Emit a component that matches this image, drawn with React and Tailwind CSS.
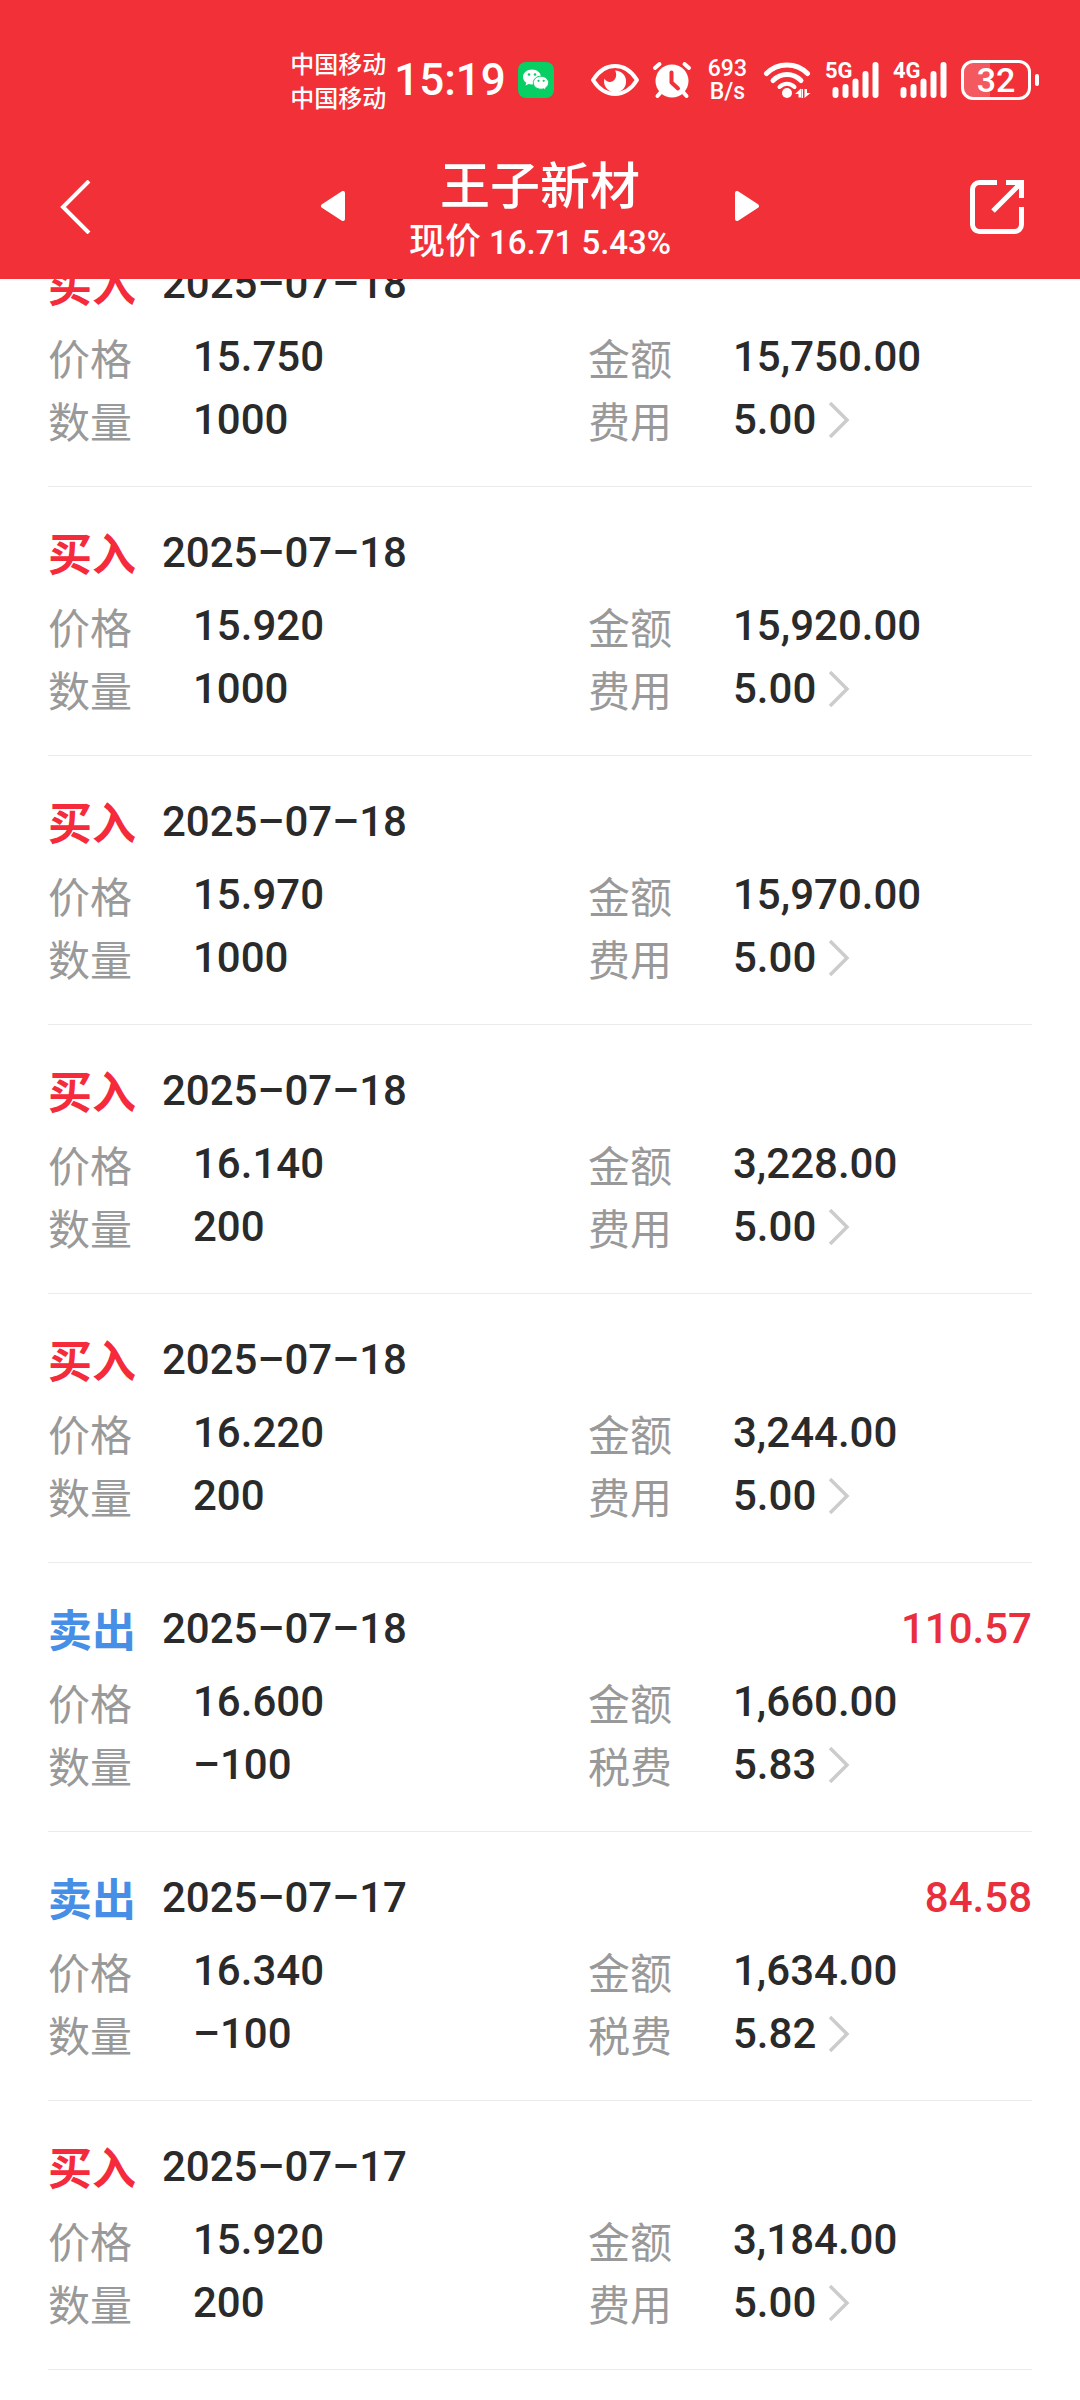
import React from 'react';

const trades = [
  { side: 'buy', date: '2025–07–18', price: '15.750', amount: '15,750.00', qty: '1000', fee: '5.00' },
  { side: 'buy', date: '2025–07–18', price: '15.920', amount: '15,920.00', qty: '1000', fee: '5.00' },
  { side: 'buy', date: '2025–07–18', price: '15.970', amount: '15,970.00', qty: '1000', fee: '5.00' },
  { side: 'buy', date: '2025–07–18', price: '16.140', amount: '3,228.00', qty: '200', fee: '5.00' },
  { side: 'buy', date: '2025–07–18', price: '16.220', amount: '3,244.00', qty: '200', fee: '5.00' },
  { side: 'sell', date: '2025–07–18', price: '16.600', amount: '1,660.00', qty: '–100', fee: '5.83', profit: '110.57' },
  { side: 'sell', date: '2025–07–17', price: '16.340', amount: '1,634.00', qty: '–100', fee: '5.82', profit: '84.58' },
  { side: 'buy', date: '2025–07–17', price: '15.920', amount: '3,184.00', qty: '200', fee: '5.00' }
];

const WechatIcon = () => (
  <svg viewBox="0 0 36 36" className="ml-3 size-9">
    <rect width="36" height="36" rx="8" fill="#07cf63" />
    <path
      d="M14 7.5c-5 0-9 3.300-9 7.500 0 2.400 1.300 4.400 3.300 5.800l-.8 2.700 3.200-1.600c1 .3 2.100.5 3.300.5 5 0 9-3.200 9-7.400s-4-7.500-9-7.500z"
      fill="#fff"
    />
    <path
      d="M23 14.200c-4.300 0-7.700 2.900-7.700 6.500s3.400 6.500 7.700 6.500c.9 0 1.800-.1 2.600-.4l2.500 1.400-.6-2.300c1.900-1.200 3.100-3.100 3.100-5.200 0-3.600-3.400-6.500-7.600-6.500z"
      fill="#fff"
      stroke="#07cf63"
      strokeWidth="1"
    />
    <g fill="#07cf63">
      <circle cx="11" cy="12.500" r="1.300" />
      <circle cx="17" cy="12.500" r="1.300" />
      <circle cx="20.500" cy="18.800" r="1.100" />
      <circle cx="25.700" cy="18.800" r="1.100" />
    </g>
  </svg>
);

const EyeIcon = () => (
  <svg viewBox="0 0 50 36" className="ml-9 h-9 w-[50px]">
    <path
      d="M3 18C9 8.500 16 4 25 4s16 4.500 22 14c-6 9.500-13 14-22 14S9 27.500 3 18z"
      fill="none"
      stroke="#fff"
      strokeWidth="4"
      strokeLinejoin="round"
    />
    <path d="M25 8.500a11 11 0 1 1-10.500 8c1.500 3.200 5.500 4.500 8.500 2.500 3.500-2.300 4-7 2-10.500z" fill="#fff" />
  </svg>
);

const AlarmIcon = () => (
  <svg viewBox="0 0 40 38" className="ml-3 h-[38px] w-10">
    <g stroke="#fff" strokeWidth="4" strokeLinecap="round">
      <path d="M3 7l4.500-4M37 7l-4.500-4" />
      <path d="M9 31l-3.500 4M31 31l3.500 4" />
    </g>
    <circle cx="20" cy="20" r="16.500" fill="#fff" />
    <path d="M19.500 11.500v10l6.500 6" fill="none" stroke="#f23037" strokeWidth="4" strokeLinecap="round" strokeLinejoin="round" />
  </svg>
);

const WifiIcon = () => (
  <svg viewBox="0 0 48 38" className="ml-4 h-[38px] w-12">
    <g fill="none" stroke="#fff" strokeWidth="5" strokeLinecap="round">
      <path d="M3.500 12.500c11-11.500 30-11.500 41 0" />
      <path d="M10 19.500c8-8 20-8 28 0" />
      <path d="M16.500 26c4.500-4.300 10.500-4.300 15 0" strokeWidth="4" />
    </g>
    <circle cx="24" cy="32" r="5" fill="#fff" />
    <path d="M32 33l6-5.500V36.500h-2.500V33zM47.500 32l-6 5V28H44v4zM38.500 28h1.500v9h-1.500z" fill="#fff" />
  </svg>
);

const Signal = ({ label }) => (
  <div className="relative ml-[14px] h-9 w-[54px]">
    <svg viewBox="0 0 54 36" className="h-9 w-[54px]">
      <g stroke="#fff" strokeWidth="6" strokeLinecap="round">
        <path d="M10.500 28v5M20.500 25v8M30.500 19.500V33M40.500 12v21M50.500 3v30" />
      </g>
    </svg>
    <span className="absolute -top-px left-0 font-[Roboto] text-[22px] font-bold leading-5">{label}</span>
  </div>
);

const Battery = () => (
  <div className="ml-[14px] flex items-center gap-1">
    <div className="relative flex h-10 w-[70px] items-center justify-center rounded-xl border-[3px] border-white">
      <div className="absolute inset-y-0 left-0 w-[26px] rounded-l-lg bg-white/20"></div>
      <span className="relative font-[Roboto] text-[34px] font-medium leading-[38px]">32</span>
    </div>
    <div className="h-3 w-1 rounded-sm bg-white"></div>
  </div>
);

const StatusBar = () => (
  <div className="flex h-[160px] items-center justify-end pr-[41px]">
    <div className="text-2xl font-medium leading-[34px]">
      <p>中国移动</p>
      <p>中国移动</p>
    </div>
    <span className="ml-2 font-[Roboto] text-[44px] font-medium leading-[44px]">15:19</span>
    <WechatIcon />
    <EyeIcon />
    <AlarmIcon />
    <div className="ml-4 text-center font-[Roboto] text-[23px] font-medium leading-[23px]">
      <p>693</p>
      <p>B/s</p>
    </div>
    <WifiIcon />
    <Signal label="5G" />
    <Signal label="4G" />
    <Battery />
  </div>
);

const NavBar = () => (
  <nav className="grid h-[119px] grid-cols-[1fr_auto_1fr] items-start px-14">
    <button type="button" aria-label="返回" className="mt-5 w-9">
      <svg viewBox="0 0 36 54" className="h-[54px] w-9" fill="none" stroke="#fff" strokeWidth="4">
        <path d="M33 1L7 27l26 26" />
      </svg>
    </button>
    <div className="flex w-[440px] items-start justify-between">
      <button type="button" aria-label="上一只" className="mt-[31px]">
        <svg viewBox="0 0 26 30" className="h-[30px] w-[26px]" fill="#fff" stroke="#fff" strokeWidth="4" strokeLinejoin="round">
          <path d="M3 15L23 2v26z" />
        </svg>
      </button>
      <div className="text-center">
        <h1 className="-mt-2 text-[50px] font-medium leading-[60px]">王子新材</h1>
        <p className="text-[36px] font-medium leading-[52px]">
          现价 <span className="font-[Roboto] text-[33px]">16.71 5.43%</span>
        </p>
      </div>
      <button type="button" aria-label="下一只" className="mt-[31px]">
        <svg viewBox="0 0 26 30" className="h-[30px] w-[26px]" fill="#fff" stroke="#fff" strokeWidth="4" strokeLinejoin="round">
          <path d="M23 15L3 2v26z" />
        </svg>
      </button>
    </div>
    <button type="button" aria-label="分享" className="mt-5 justify-self-end">
      <svg viewBox="0 0 54 54" className="size-[54px]" fill="none" stroke="#fff" strokeWidth="5">
        <path d="M27 2.500H9.500a7 7 0 0 0-7 7v35a7 7 0 0 0 7 7h35a7 7 0 0 0 7-7V27" />
        <path d="M36 2.500h15.500V18M51 3L23 31" />
      </svg>
    </button>
  </nav>
);

const Field = ({ label, children }) => (
  <div className="flex h-[63px] items-center pl-12">
    <dt className="w-[145px] text-[42px] text-[#999999]">{label}</dt>
    <dd className="font-[Roboto] text-[42px] font-medium">{children}</dd>
  </div>
);

const Trade = ({ trade }) => {
  const sell = trade.side === 'sell';

  return (
    <li>
      <div className="flex h-[97px] items-center px-12 pt-[33px]">
        <span className={sell ? 'text-[44px] font-bold text-[#478fe6]' : 'text-[44px] font-bold text-[#f52a3b]'}>
          {sell ? '卖出' : '买入'}
        </span>
        <time className="ml-[26px] font-[Roboto] text-[42px] font-medium">{trade.date}</time>
        {trade.profit && (
          <span className="ml-auto font-[Roboto] text-[42px] font-medium text-[#e92e3d]">{trade.profit}</span>
        )}
      </div>
      <dl className="mt-[10px] grid grid-cols-2 pb-[35px]">
        <Field label="价格">{trade.price}</Field>
        <Field label="金额">{trade.amount}</Field>
        <Field label="数量">{trade.qty}</Field>
        <Field label={sell ? '税费' : '费用'}>
          <button type="button" className="flex items-center gap-3">
            {trade.fee}
            <svg viewBox="0 0 22 36" className="h-9 w-[22px]" fill="none" stroke="#cccccc" strokeWidth="3.500">
              <path d="M2 1l17 17L2 35" />
            </svg>
          </button>
        </Field>
      </dl>
      <div className="mx-12 h-px bg-[#ebebeb]"></div>
    </li>
  );
};

const App = () => {
  return (
    <div className="min-h-screen bg-white font-['Noto_Sans_CJK_SC',sans-serif] text-[#2a2a2a]">
      <header className="sticky top-0 z-10 bg-[#f23037] text-white">
        <StatusBar />
        <NavBar />
      </header>

      {/* The list is scrolled a little way under the header */}
      <ul className="-mt-[61px]">
        {trades.map((trade, index) => (
          <Trade key={index} trade={trade} />
        ))}
      </ul>
    </div>
  );
};

export default App;
